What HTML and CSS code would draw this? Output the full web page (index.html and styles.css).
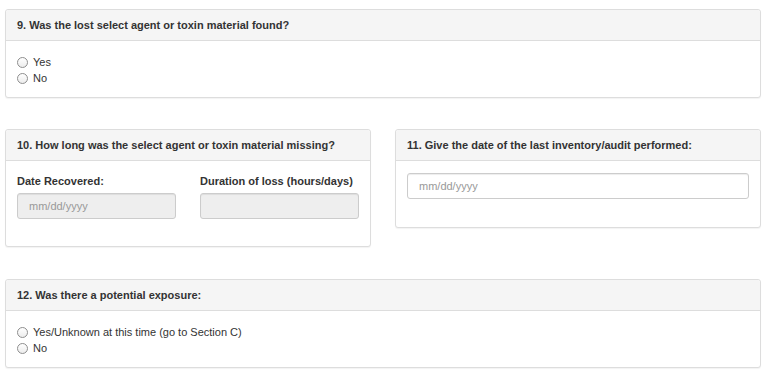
FILE: index.html
```html
<!DOCTYPE html>
<html lang="en">

<head>
    <meta charset="UTF-8">
    <meta name="viewport" content="width=device-width, initial-scale=1.0">
    <title>Loss Report - Section B</title>
    <link rel="stylesheet" href="styles.css">
</head>

<body>
    <div class="page">

        <div class="panel">
            <div class="panel-heading">9. Was the lost select agent or toxin material found?</div>
            <div class="panel-body radios">
                <label class="radio"><input type="radio" name="found" value="yes"> Yes</label>
                <label class="radio"><input type="radio" name="found" value="no"> No</label>
            </div>
        </div>

        <div class="row">
            <div class="panel">
                <div class="panel-heading">10. How long was the select agent or toxin material missing?</div>
                <div class="panel-body fields">
                    <div class="form-group">
                        <label for="recovered">Date Recovered:</label>
                        <input type="text" id="recovered" class="form-control" placeholder="mm/dd/yyyy" disabled>
                    </div>
                    <div class="form-group">
                        <label for="duration">Duration of loss (hours/days)</label>
                        <input type="text" id="duration" class="form-control" disabled>
                    </div>
                </div>
            </div>

            <div class="panel">
                <div class="panel-heading">11. Give the date of the last inventory/audit performed:</div>
                <div class="panel-body single">
                    <input type="text" id="audit" class="form-control" placeholder="mm/dd/yyyy">
                </div>
            </div>
        </div>

        <div class="panel">
            <div class="panel-heading">12. Was there a potential exposure:</div>
            <div class="panel-body radios">
                <label class="radio"><input type="radio" name="exposure" value="yes"> Yes/Unknown at this time (go to Section C)</label>
                <label class="radio"><input type="radio" name="exposure" value="no"> No</label>
            </div>
        </div>

    </div>
</body>
</html>
```

FILE: styles.css
```css
body {
    font-family: "Liberation Sans", Arial, sans-serif;
    font-size: 11px;
    color: #333;
    background-color: #fff;
    margin: 0;
    padding: 0;
}

.page {
    padding: 9px 10px 0 5px;
}

.panel {
    background-color: #fff;
    border: 1px solid #ddd;
    border-radius: 3px;
    box-shadow: 0 1px 1px rgba(0, 0, 0, 0.05);
    margin-bottom: 31px;
}

.panel-heading {
    background-color: #f5f5f5;
    border-bottom: 1px solid #ddd;
    border-radius: 3px 3px 0 0;
    padding: 8px 11px;
    line-height: 14px;
    font-weight: bold;
}

.panel-body {
    padding: 11px;
}

.row {
    display: flex;
    align-items: flex-start;
    gap: 24px;
    margin-bottom: 32px;
}

.row .panel {
    flex: 1;
    margin-bottom: 0;
}

.radios {
    padding: 13px 11px 11px;
}

.radio {
    display: flex;
    align-items: center;
    gap: 5px;
    line-height: 16px;
}

.radio input {
    appearance: none;
    -webkit-appearance: none;
    width: 11px;
    height: 11px;
    margin: 0;
    border: 1px solid #8e8e8e;
    border-radius: 50%;
    background: linear-gradient(#fff, #ececec);
}

.fields {
    display: flex;
    gap: 24px;
    padding-top: 12px;
    padding-bottom: 27px;
}

.form-group {
    flex: 1;
}

.form-group label {
    display: block;
    font-weight: bold;
    line-height: 16px;
    margin-bottom: 4px;
}

.form-control {
    display: block;
    box-sizing: border-box;
    width: 100%;
    height: 26px;
    padding: 4px 11px;
    font-family: inherit;
    font-size: 11px;
    color: #555;
    background-color: #fff;
    border: 1px solid #ccc;
    border-radius: 3px;
    box-shadow: inset 0 1px 1px rgba(0, 0, 0, 0.075);
}

.form-control::placeholder {
    color: #999;
}

.form-control:disabled {
    background-color: #eee;
}

.single {
    padding-top: 12px;
    padding-bottom: 28px;
}
```
